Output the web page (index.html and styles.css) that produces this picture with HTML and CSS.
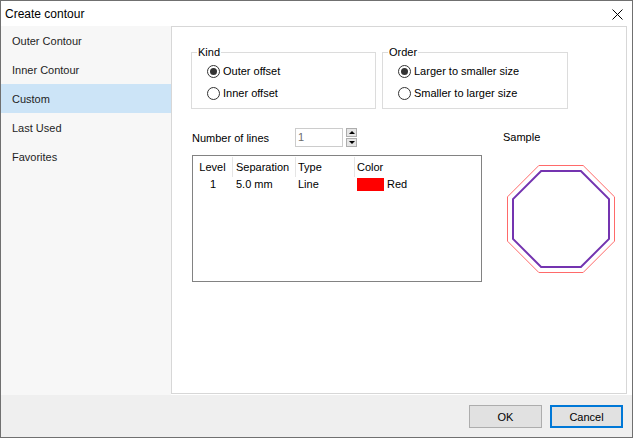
FILE: index.html
```html
<!DOCTYPE html>
<html lang="en">
<head>
    <meta charset="UTF-8">
    <title>Create contour</title>
    <link rel="stylesheet" href="styles.css">
</head>
<body>
    <div class="window">
        <div class="titlebar">
            <span class="title">Create contour</span>
            <svg class="close" width="11" height="11" viewBox="0 0 11 11">
                <path d="M0.5 0.5 L10.5 10.5 M10.5 0.5 L0.5 10.5" stroke="#000" stroke-width="1"/>
            </svg>
        </div>

        <div class="main">
            <!-- preset list -->
            <ul class="nav">
                <li>Outer Contour</li>
                <li>Inner Contour</li>
                <li class="active">Custom</li>
                <li>Last Used</li>
                <li>Favorites</li>
            </ul>

            <div class="panel">
                <div class="groups">
                    <fieldset class="group kind">
                        <legend>Kind</legend>
                        <div class="radio"><span class="dot checked"></span>Outer offset</div>
                        <div class="radio"><span class="dot"></span>Inner offset</div>
                    </fieldset>
                    <fieldset class="group order">
                        <legend>Order</legend>
                        <div class="radio"><span class="dot checked"></span>Larger to smaller size</div>
                        <div class="radio"><span class="dot"></span>Smaller to larger size</div>
                    </fieldset>
                </div>

                <div class="lower">
                    <div class="lines">
                        <div class="count-row">
                            <span class="count-label">Number of lines</span>
                            <div class="count-input">1</div>
                            <div class="spin">
                                <span class="spin-btn up"></span>
                                <span class="spin-btn down"></span>
                            </div>
                        </div>

                        <div class="list">
                            <div class="list-head">
                                <span class="col level">Level</span>
                                <span class="col">Separation</span>
                                <span class="col">Type</span>
                                <span class="col">Color</span>
                            </div>
                            <div class="list-row">
                                <span class="col level">1</span>
                                <span class="col">5.0 mm</span>
                                <span class="col">Line</span>
                                <span class="col color"><span class="swatch"></span>Red</span>
                            </div>
                        </div>
                    </div>

                    <div class="sample">
                        <div class="sample-label">Sample</div>
                        <svg class="sample-shape" width="122" height="120" viewBox="0 0 122 120">
                            <polygon points="35.84,5.5 80.16,5.5 111.5,36.84 111.5,81.16 80.16,112.5 35.84,112.5 4.5,81.16 4.5,36.84" fill="none" stroke="#ff6a6a" stroke-width="1"/>
                            <polygon points="38.12,11 77.88,11 106,39.12 106,78.88 77.88,107 38.12,107 10,78.88 10,39.12" fill="none" stroke="#7434b0" stroke-width="2"/>
                        </svg>
                    </div>
                </div>
            </div>
        </div>

        <div class="footer">
            <button class="btn">OK</button>
            <button class="btn default">Cancel</button>
        </div>
    </div>
</body>
</html>
```

FILE: styles.css
```css
body {
    margin: 0;
    padding: 0;
    font-family: "Liberation Sans", Arial, sans-serif;
    font-size: 11px;
    color: #000;
    background: #fff;
}

.window {
    width: 633px;
    height: 438px;
    box-sizing: border-box;
    border: 1px solid #707070;
    display: flex;
    flex-direction: column;
    background: #fff;
}

.titlebar {
    height: 25px;
    display: flex;
    align-items: center;
    padding-left: 4px;
    background: #fff;
    font-size: 12px;
}

.title {
    flex: 1;
}

.close {
    margin-right: 9px;
    margin-top: 1px;
}

.main {
    height: 369px;
    display: flex;
}

.nav {
    list-style: none;
    margin: 0;
    padding: 0;
    width: 170px;
    background: #f7f7f7;
}

.nav li {
    height: 28px;
    padding-top: 1px;
    line-height: 29px;
    padding-left: 11px;
    color: #1e1e1e;
}

.nav li.active {
    background: #cce4f7;
}

.panel {
    flex: 1;
    border: 1px solid #d7d7d7;
    margin: 0 5px 1px 0;
    padding: 18px 0 0 19px;
    background: #fff;
}

.groups {
    display: flex;
    gap: 6px;
}

.group {
    margin: 0;
    border: 1px solid #dcdcdc;
    padding: 0 4px 4px 5px;
    box-sizing: border-box;
}

.kind {
    width: 185px;
}

.order {
    width: 186px;
}

.group legend {
    padding: 0 1px;
    line-height: 15px;
}

.radio {
    height: 22px;
    display: flex;
    align-items: center;
    padding-left: 10px;
}

.dot {
    width: 13px;
    height: 13px;
    box-sizing: border-box;
    border: 1px solid #333;
    border-radius: 50%;
    margin-right: 3px;
    display: flex;
    align-items: center;
    justify-content: center;
}

.dot.checked::after {
    content: "";
    width: 7px;
    height: 7px;
    border-radius: 50%;
    background: #333;
}

.lower {
    display: flex;
    margin-top: 19px;
    margin-left: 1px;
}

.lines {
    width: 290px;
}

.count-row {
    display: flex;
    align-items: center;
    height: 19px;
}

.count-label {
    width: 103px;
}

.count-input {
    width: 48px;
    height: 19px;
    box-sizing: border-box;
    border: 1px solid #cccccc;
    padding-left: 2px;
    line-height: 17px;
    color: #6d6d6d;
}

.spin {
    margin-left: 3px;
    display: flex;
    flex-direction: column;
    gap: 1px;
}

.spin-btn {
    width: 11px;
    height: 9px;
    box-sizing: border-box;
    border: 1px solid #adadad;
    background: #e5e5e5;
    display: flex;
    align-items: center;
    justify-content: center;
}

.spin-btn::after {
    content: "";
    border-left: 3px solid transparent;
    border-right: 3px solid transparent;
}

.spin-btn.up::after {
    border-bottom: 3px solid #000;
}

.spin-btn.down::after {
    border-top: 3px solid #000;
}

.list {
    margin-top: 8px;
    height: 127px;
    box-sizing: border-box;
    border: 1px solid #828282;
    padding-top: 1px;
}

.list-head, .list-row {
    display: grid;
    grid-template-columns: 40px 63px 59px 1fr;
}

.list-head {
    height: 20px;
    line-height: 20px;
}

.list-head .col:nth-child(-n+3) {
    border-right: 1px solid #e5e5e5;
}

.list-row {
    height: 14px;
    line-height: 14px;
}

.col {
    padding-left: 2px;
    white-space: nowrap;
}

.col:nth-child(2) {
    padding-left: 3px;
}

.col.level {
    padding-left: 0;
    text-align: center;
}

.col.color {
    display: flex;
    align-items: center;
}

.swatch {
    width: 27px;
    height: 13px;
    background: #ff0000;
    margin-right: 3px;
}

.sample {
    margin-left: 21px;
}

.sample-label {
    height: 19px;
    line-height: 19px;
}

.sample-shape {
    display: block;
    margin-top: 13px;
}

.footer {
    flex: 1;
    background: #efefef;
    display: flex;
    justify-content: flex-end;
    align-items: flex-start;
    gap: 8px;
    padding: 10px 9px 0 0;
}

.btn {
    width: 73px;
    height: 23px;
    box-sizing: border-box;
    border: 1px solid #adadad;
    background: #e1e1e1;
    font-family: inherit;
    font-size: 11px;
    color: #000;
    padding: 0;
}

.btn.default {
    border: 2px solid #0078d7;
}
```
